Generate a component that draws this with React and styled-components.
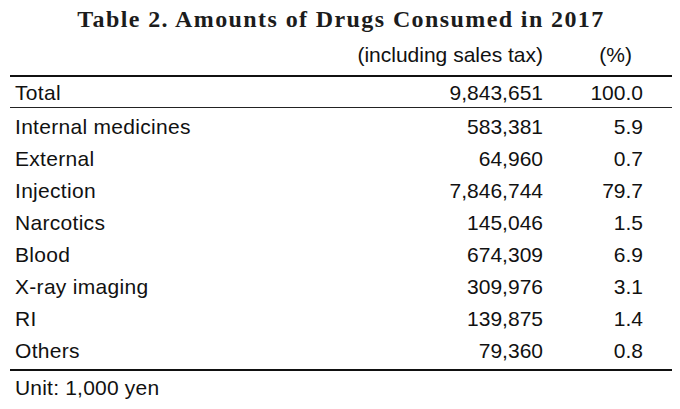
import React from "react";
import styled, { createGlobalStyle } from "styled-components";

const GlobalStyle = createGlobalStyle`
  body {
    margin: 0;
    background: #fff;
    color: #111;
  }
`;

const Page = styled.div`
  width: 680px;
  height: 409px;
  padding: 0 8px 0 10px;
  box-sizing: border-box;
  font-family: "Liberation Sans", Arial, sans-serif;
`;

const Title = styled.h1`
  margin: 0;
  padding-top: 6px;
  height: 35px;
  box-sizing: border-box;
  text-align: center;
  font-family: "Liberation Serif", "Times New Roman", serif;
  font-weight: bold;
  font-size: 24px;
  line-height: 26px;
  color: #1c1c1c;
  letter-spacing: 1.4px;
  white-space: nowrap;
`;

const Row = styled.div`
  display: grid;
  grid-template-columns: 1fr 220px 129px;
  height: ${(p) => p.$height || 32}px;
  padding-top: ${(p) => p.$pt || 0}px;
  line-height: 32px;
  font-size: 21px;
  white-space: nowrap;
  border-bottom: ${(p) => p.$rule || "none"};
`;

const Label = styled.div`
  padding-left: 5px;
  letter-spacing: 0.3px;
`;

const Num = styled.div`
  text-align: right;
  padding-right: ${(p) => p.$pad || 0}px;
`;

const Body = styled.div`
  padding: 3px 0 2px;
  border-bottom: 2px solid #111;
`;

const Note = styled.div`
  font-size: 21px;
  line-height: 32px;
  padding: 1px 0 0 5px;
  letter-spacing: 0.2px;
`;

const rows = [
  ["Internal medicines", "583,381", "5.9"],
  ["External", "64,960", "0.7"],
  ["Injection", "7,846,744", "79.7"],
  ["Narcotics", "145,046", "1.5"],
  ["Blood", "674,309", "6.9"],
  ["X-ray imaging", "309,976", "3.1"],
  ["RI", "139,875", "1.4"],
  ["Others", "79,360", "0.8"],
];

export default function App() {
  return (
    <Page>
      <GlobalStyle />
      <Title>Table 2. Amounts of Drugs Consumed in 2017</Title>
      <Row $height={36} $pt={4} $rule="2px solid #111">
        <Label />
        <Num>(including sales tax)</Num>
        <Num $pad={40}>(%)</Num>
      </Row>
      <Row $height={30} $rule="1px solid #222">
        <Label>Total</Label>
        <Num>9,843,651</Num>
        <Num $pad={29}>100.0</Num>
      </Row>
      <Body>
        {rows.map(([name, amount, pct]) => (
          <Row key={name}>
            <Label>{name}</Label>
            <Num>{amount}</Num>
            <Num $pad={29}>{pct}</Num>
          </Row>
        ))}
      </Body>
      <Note>Unit: 1,000 yen</Note>
    </Page>
  );
}
